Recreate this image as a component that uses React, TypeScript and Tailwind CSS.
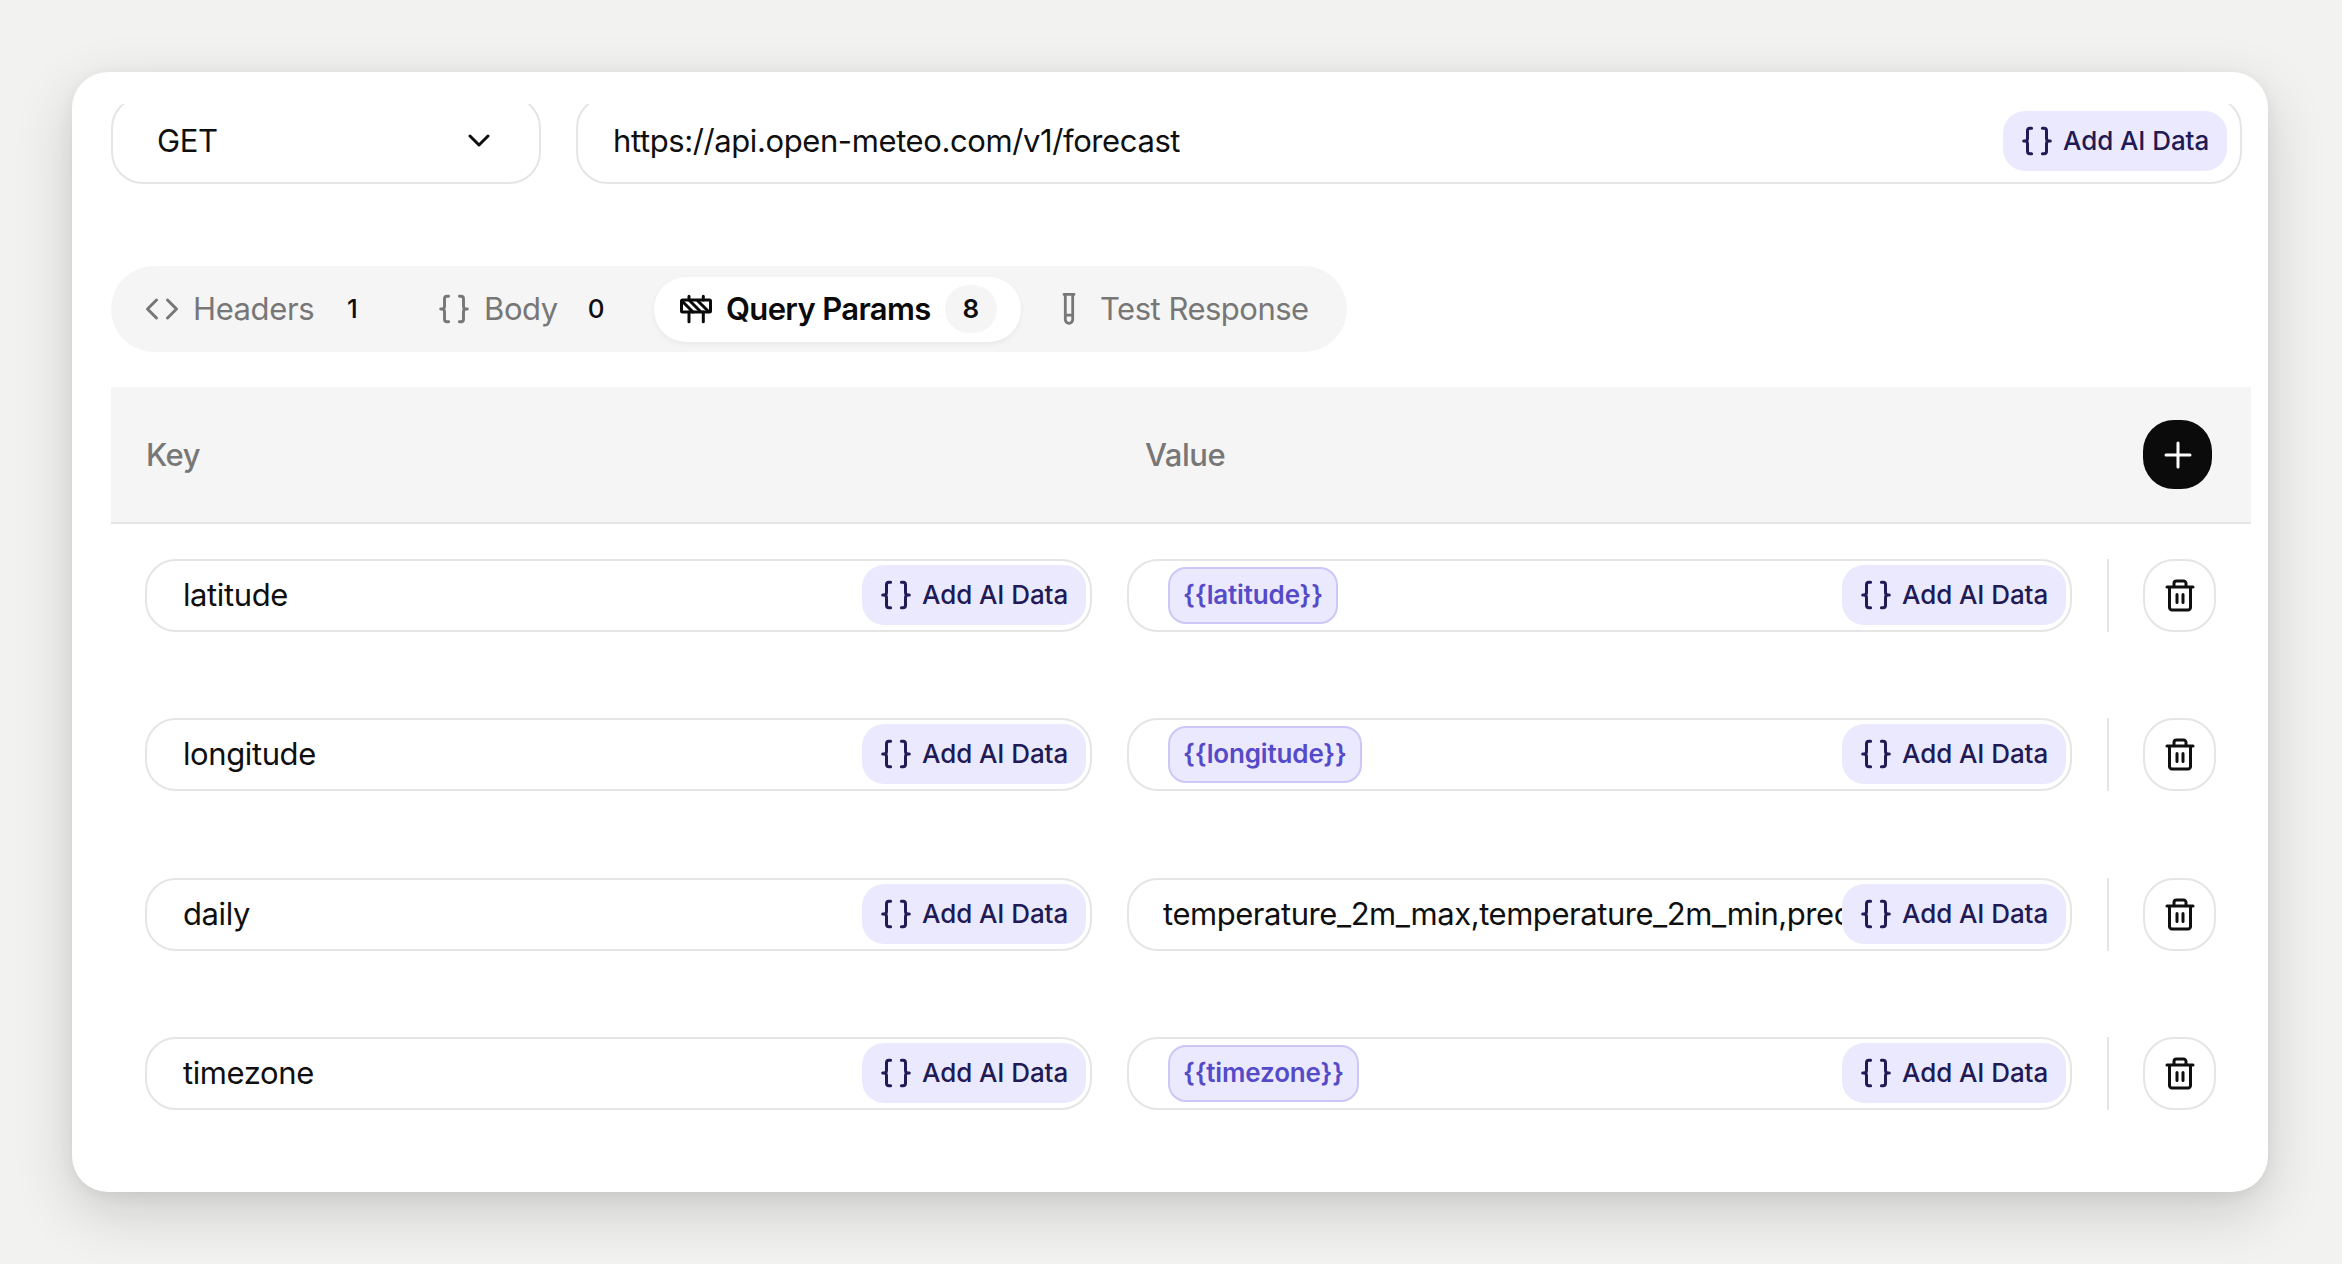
import React from 'react';

interface Param {
  key: string;
  value: string;
  isVariable: boolean;
}

interface IconProps {
  className?: string;
}

const params: Param[] = [
  { key: 'latitude', value: '{{latitude}}', isVariable: true },
  { key: 'longitude', value: '{{longitude}}', isVariable: true },
  { key: 'daily', value: 'temperature_2m_max,temperature_2m_min,prec', isVariable: false },
  { key: 'timezone', value: '{{timezone}}', isVariable: true },
];

const BracesIcon: React.FC<IconProps> = ({ className }) => (
  <svg viewBox="0 0 30 30" fill="none" stroke="currentColor" strokeLinecap="round" strokeLinejoin="round" className={className}>
    <path d="M9.600 2.200H8a2.500 2.500 0 0 0-2.500 2.500v7.500c0 1.800-1 2.800-2.500 2.800H1.700H3c1.500 0 2.500 1 2.500 2.800v7.500A2.500 2.500 0 0 0 8 27.800h1.600" />
    <path d="M20.400 2.200H22a2.500 2.500 0 0 1 2.500 2.500v7.500c0 1.800 1 2.800 2.500 2.800h1.300H27c-1.500 0-2.500 1-2.500 2.800v7.500a2.500 2.500 0 0 1-2.500 2.500h-1.600" />
  </svg>
);

const CodeIcon: React.FC<IconProps> = ({ className }) => (
  <svg viewBox="0 0 34 24" fill="none" stroke="currentColor" strokeWidth="3" strokeLinecap="round" strokeLinejoin="round" className={className}>
    <path d="M11.500 3L2.500 12l9 9M22.500 3l9 9-9 9" />
  </svg>
);

const BarrierIcon: React.FC<IconProps> = ({ className }) => (
  <svg viewBox="0 0 34 30" fill="none" stroke="currentColor" strokeWidth="3" strokeLinecap="round" strokeLinejoin="round" className={className}>
    <rect x="2.500" y="6" width="29" height="12" rx="1" />
    <path d="M10 2.200v3.800M24.300 2.200v3.800M10 18v9.800M24.300 18v9.800M4 8l10 10M10.500 6.500l11 11M18.500 6.500l11 11" />
  </svg>
);

const TubeIcon: React.FC<IconProps> = ({ className }) => (
  <svg viewBox="0 0 16 34" fill="none" stroke="currentColor" strokeWidth="2.800" strokeLinecap="round" strokeLinejoin="round" className={className}>
    <path d="M3 2.400h10M4.300 2.400v25.200a3.700 3.700 0 0 0 7.400 0V2.400M4.300 23.200h7.400" />
  </svg>
);

const TrashIcon: React.FC<IconProps> = ({ className }) => (
  <svg viewBox="0 0 30 33" fill="none" stroke="currentColor" strokeWidth="3" strokeLinecap="round" strokeLinejoin="round" className={className}>
    <path d="M2 8h26M4.500 8v20.500a2.500 2.500 0 0 0 2.500 2.500h16a2.500 2.500 0 0 0 2.500-2.500V8M9 8V4.500A2.500 2.500 0 0 1 11.500 2h7A2.500 2.500 0 0 1 21 4.500V8M12 15.500v8M18 15.500v8" />
  </svg>
);

const AddDataButton: React.FC = () => (
  <button className="flex h-[60px] w-[224px] shrink-0 items-center rounded-[22px] bg-[#ebe9fe] pl-[19px] text-[#211a55]">
    <BracesIcon className="mr-[11px] size-[30px] stroke-[3]" />
    <span className="text-[26px] leading-8 font-medium tracking-[-0.080px] whitespace-nowrap">Add AI Data</span>
  </button>
);

const Badge: React.FC<{ count: number; active?: boolean }> = ({ count, active }) => (
  <span
    className={`flex h-12 w-[52px] items-center justify-center rounded-full text-[26px] text-[#0f0f0f] ${active ? 'bg-[#f5f5f5] font-semibold' : 'font-medium'}`}
  >
    {count}
  </span>
);

const ParamRow: React.FC<{ param: Param }> = ({ param }) => (
  <div className="flex h-[73px]">
    <div className="flex w-[947px] items-center justify-between rounded-[31px] border-2 border-[#e5e5e5] pr-1 pb-px pl-9">
      <span>{param.key}</span>
      <AddDataButton />
    </div>

    <div className="ml-[35px] flex w-[945px] items-center justify-between rounded-[31px] border-2 border-[#e5e5e5] pr-1 pb-px pl-[34px]">
      {param.isVariable ? (
        <span className="ml-[5px] flex h-[57px] items-center rounded-[18px] border-2 border-[#cdc7f8] bg-[#ebe9fe] px-[13px] text-[26px] font-semibold tracking-[-0.150px] text-[#554ac8]">
          {param.value}
        </span>
      ) : (
        <span className="min-w-0 flex-1 overflow-hidden tracking-[-0.450px] whitespace-nowrap">{param.value}</span>
      )}
      <AddDataButton />
    </div>

    <div className="ml-[35px] w-[2px] bg-[#e5e5e5]" />

    <button className="ml-[34px] flex size-[73px] items-center justify-center rounded-[31px] border-2 border-[#e5e5e5]">
      <TrashIcon className="h-[33px] w-[30px]" />
    </button>
  </div>
);

const App: React.FC = () => {
  return (
    <div className="h-[1264px] w-[2342px] overflow-hidden bg-[#f2f2f0] p-[72px] font-['Inter',sans-serif] text-[31px] leading-10 tracking-[-0.400px] text-[#0f0f0f]">
      <div className="h-[1120px] w-[2196px] rounded-[36px] bg-white pt-8 pl-[39px] shadow-[0_20px_60px_rgba(0,0,0,0.16),0_4px_16px_rgba(0,0,0,0.06)]">
        <div className="h-[1088px] overflow-hidden">
          {/* Method and URL, scrolled slightly past the top edge */}
          <div className="-mt-2 flex gap-[35px]">
            <div className="flex h-[88px] w-[430px] items-center justify-between rounded-[32px] border-2 border-[#e5e5e5] pt-[2px] pr-[49px] pl-[44px]">
              <span>GET</span>
              <svg viewBox="0 0 22 14" fill="none" stroke="currentColor" strokeWidth="3" strokeLinecap="round" strokeLinejoin="round" className="h-[14px] w-[22px]">
                <path d="M2 2l9 9 9-9" />
              </svg>
            </div>
            <div className="flex h-[88px] w-[1666px] items-center justify-between rounded-[32px] border-2 border-[#e5e5e5] pt-[2px] pr-[13px] pl-[35px]">
              <span>https://api.open-meteo.com/v1/forecast</span>
              <AddDataButton />
            </div>
          </div>

          {/* Tabs */}
          <div className="mt-[82px] flex h-[86px] w-[1236px] items-center rounded-full bg-[#f5f5f5] text-[#777777]">
            <div className="flex w-[328px] items-center pl-[34px]">
              <CodeIcon className="mr-[14px] h-6 w-[34px]" />
              <span className="mr-[12px]">Headers</span>
              <Badge count={1} />
            </div>
            <div className="flex w-[215px] items-center">
              <BracesIcon className="mr-[15px] size-[30px] stroke-[2.900]" />
              <span className="mr-[12px]">Body</span>
              <Badge count={0} />
            </div>
            <div className="flex h-[65px] w-[367px] items-center rounded-[32px] bg-white pl-[25px] text-[#0a0a0a] shadow-[0_2px_5px_rgba(0,0,0,0.06)]">
              <BarrierIcon className="mr-[13px] h-[30px] w-[34px]" />
              <span className="mr-[14px] font-semibold tracking-[-0.650px]">Query Params</span>
              <Badge count={8} active />
            </div>
            <div className="flex items-center pl-[40px]">
              <TubeIcon className="mr-[23px] h-[34px] w-4" />
              <span className="tracking-[-0.500px]">Test Response</span>
            </div>
          </div>

          {/* Query params table */}
          <div className="mt-[35px] w-[2140px]">
            <div className="flex h-[137px] items-center border-b-2 border-[#e5e5e5] bg-[#f5f5f5] pr-[39px] pl-[35px] font-medium text-[#777777]">
              <span className="w-[999px] tracking-[-0.500px]">Key</span>
              <span className="tracking-[-0.500px]">Value</span>
              <button className="ml-auto flex size-[69px] items-center justify-center rounded-[31px] bg-[#0b0b0b] text-white">
                <svg viewBox="0 0 28 28" fill="none" stroke="currentColor" strokeWidth="3" strokeLinecap="round" className="size-7">
                  <path d="M14 2v24M2 14h24" />
                </svg>
              </button>
            </div>
            <div className="flex flex-col gap-[86.400px] pt-[35px] pl-[34px]">
              {params.map(param => (
                <ParamRow key={param.key} param={param} />
              ))}
            </div>
          </div>
        </div>
      </div>
    </div>
  );
};

export default App;
